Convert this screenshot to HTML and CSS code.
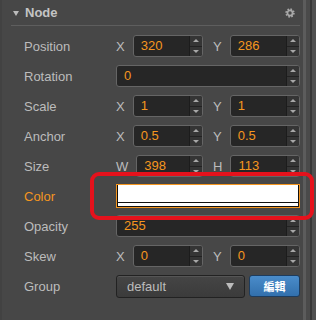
FILE: index.html
```html
<!DOCTYPE html>
<html>
<head>
<meta charset="utf-8">
<link rel="stylesheet" href="styles.css">
</head>
<body>
<div class="app">
  <div class="panel">
    <div class="header">
      <span class="caret"></span>
      <span class="title">Node</span>
      <svg class="gear" width="10" height="10" viewBox="0 0 10 10">
        <circle cx="5" cy="5" r="2.6" fill="none" stroke="#a9a9a9" stroke-width="1.8"/>
        <circle cx="5" cy="5" r="3.9" fill="none" stroke="#a9a9a9" stroke-width="1.6" stroke-dasharray="1.6 1.46"/>
      </svg>
    </div>
    <div class="rows">
      <div class="row">
        <div class="label">Position</div>
        <div class="field vec">
          <div class="axis"><span class="ax">X</span><div class="num"><span class="val">320</span><div class="spin"><i class="up"></i><i class="down"></i></div></div></div>
          <div class="axis"><span class="ax">Y</span><div class="num"><span class="val">286</span><div class="spin"><i class="up"></i><i class="down"></i></div></div></div>
        </div>
      </div>
      <div class="row">
        <div class="label">Rotation</div>
        <div class="field">
          <div class="num"><span class="val">0</span><div class="spin"><i class="up"></i><i class="down"></i></div></div>
        </div>
      </div>
      <div class="row">
        <div class="label">Scale</div>
        <div class="field vec">
          <div class="axis"><span class="ax">X</span><div class="num"><span class="val">1</span><div class="spin"><i class="up"></i><i class="down"></i></div></div></div>
          <div class="axis"><span class="ax">Y</span><div class="num"><span class="val">1</span><div class="spin"><i class="up"></i><i class="down"></i></div></div></div>
        </div>
      </div>
      <div class="row">
        <div class="label">Anchor</div>
        <div class="field vec">
          <div class="axis"><span class="ax">X</span><div class="num"><span class="val">0.5</span><div class="spin"><i class="up"></i><i class="down"></i></div></div></div>
          <div class="axis"><span class="ax">Y</span><div class="num"><span class="val">0.5</span><div class="spin"><i class="up"></i><i class="down"></i></div></div></div>
        </div>
      </div>
      <div class="row">
        <div class="label">Size</div>
        <div class="field vec">
          <div class="axis"><span class="ax">W</span><div class="num"><span class="val">398</span><div class="spin"><i class="up"></i><i class="down"></i></div></div></div>
          <div class="axis"><span class="ax">H</span><div class="num"><span class="val">113</span><div class="spin"><i class="up"></i><i class="down"></i></div></div></div>
        </div>
      </div>
      <div class="row">
        <div class="label orange">Color</div>
        <div class="field">
          <div class="colorbox"><div class="swatch"><div class="alpha"></div></div></div>
        </div>
      </div>
      <div class="row">
        <div class="label">Opacity</div>
        <div class="field">
          <div class="num"><span class="val">255</span><div class="spin"><i class="up"></i><i class="down"></i></div></div>
        </div>
      </div>
      <div class="row">
        <div class="label">Skew</div>
        <div class="field vec">
          <div class="axis"><span class="ax">X</span><div class="num"><span class="val">0</span><div class="spin"><i class="up"></i><i class="down"></i></div></div></div>
          <div class="axis"><span class="ax">Y</span><div class="num"><span class="val">0</span><div class="spin"><i class="up"></i><i class="down"></i></div></div></div>
        </div>
      </div>
      <div class="row">
        <div class="label">Group</div>
        <div class="field group">
          <div class="select"><span>default</span><span class="arrow"></span></div>
          <div class="btn">編輯</div>
        </div>
      </div>
    </div>
  </div>
  <div class="scroll"></div>
</div>
<div class="highlight"></div>
</body>
</html>
```

FILE: styles.css
```css
html, body {
  margin: 0;
  padding: 0;
}
body {
  width: 316px;
  height: 320px;
  overflow: hidden;
  background: #474747;
  font-family: "Liberation Sans", Arial, sans-serif;
  font-size: 13px;
  color: #bcbcbc;
  position: relative;
}
.app {
  display: flex;
  height: 320px;
}
.panel {
  flex: 1;
  padding-right: 3px;
  border-left: 2px solid #424242;
}
.header {
  height: 25px;
  margin-left: 9px;
  border-bottom: 1px solid #5e5e5e;
  display: flex;
  align-items: center;
  padding-left: 2px;
}
.caret {
  width: 0;
  height: 0;
  border-left: 3px solid transparent;
  border-right: 3px solid transparent;
  border-top: 5px solid #bcbcbc;
  margin-right: 6px;
  margin-top: 1px;
}
.title {
  font-weight: bold;
  color: #c4c4c4;
  flex: 1;
}
.gear {
  margin-right: 5px;
}
.rows {
  padding-top: 5px;
}
.row {
  height: 30px;
  display: flex;
  align-items: center;
}
.label {
  width: 114px;
  padding-left: 22px;
  box-sizing: border-box;
  flex: none;
}
.orange {
  color: #f5961f;
}
.field {
  flex: 1;
  display: flex;
  align-items: center;
}
.vec {
  gap: 10px;
}
.axis {
  flex: 1;
  display: flex;
  align-items: center;
}
.ax {
  margin-right: 8px;
  color: #bcbcbc;
}
.num {
  flex: 1;
  height: 22px;
  box-sizing: border-box;
  border: 1px solid #656565;
  border-radius: 3px;
  background: #262626;
  display: flex;
  overflow: hidden;
}
.val {
  flex: 1;
  padding-left: 7px;
  line-height: 20px;
  color: #f5961f;
}
.spin {
  width: 12px;
  background: #353535;
  border-left: 1px solid #1c1c1c;
  display: flex;
  flex-direction: column;
}
.spin i {
  flex: 1;
  display: flex;
  align-items: center;
  justify-content: center;
}
.spin i.up {
  border-bottom: 1px solid #222;
}
.spin i.up::before {
  content: "";
  border-left: 3px solid transparent;
  border-right: 3px solid transparent;
  border-bottom: 3px solid #a8a8a8;
}
.spin i.down::before {
  content: "";
  border-left: 3px solid transparent;
  border-right: 3px solid transparent;
  border-top: 3px solid #a8a8a8;
}
.colorbox {
  flex: 1;
  height: 24px;
  box-sizing: border-box;
  border: 1px solid #f5961f;
  display: flex;
}
.swatch {
  flex: 1;
  border: 1px solid #111;
  border-top: none;
  background: #fff;
  display: flex;
  flex-direction: column;
  justify-content: flex-end;
}
.alpha {
  height: 3px;
  border-top: 1px solid #111;
  background: #fff;
}
.group {
  gap: 4px;
}
.select {
  flex: 1;
  height: 23px;
  box-sizing: border-box;
  border: 1px solid #222;
  border-radius: 3px;
  background: linear-gradient(#454545, #3b3b3b);
  box-shadow: inset 0 1px 0 #555;
  display: flex;
  align-items: center;
  justify-content: space-between;
  padding: 0 10px 0 10px;
  color: #bcbcbc;
}
.arrow {
  width: 0;
  height: 0;
  border-left: 4px solid transparent;
  border-right: 4px solid transparent;
  border-top: 7px solid #bcbcbc;
}
.btn {
  width: 51px;
  height: 22px;
  box-sizing: border-box;
  border: 1px solid #1d3c5e;
  border-radius: 3px;
  background: linear-gradient(#4a8cca, #3270ad);
  color: #fff;
  font-family: "Noto Sans CJK TC", "Noto Sans CJK SC", sans-serif;
  font-size: 11px;
  font-weight: bold;
  display: flex;
  align-items: center;
  justify-content: center;
}
.scroll {
  width: 13px;
  background: linear-gradient(to right, #5c5c5c 0, #5c5c5c 3px, #4a4a4a 3px, #4a4a4a 7px, #383838 7px, #383838 9px, #505050 9px);
}
.highlight {
  position: absolute;
  left: 90px;
  top: 172px;
  width: 224px;
  height: 48px;
  box-sizing: border-box;
  border: 4px solid #e5121c;
  border-radius: 9px;
}
```
